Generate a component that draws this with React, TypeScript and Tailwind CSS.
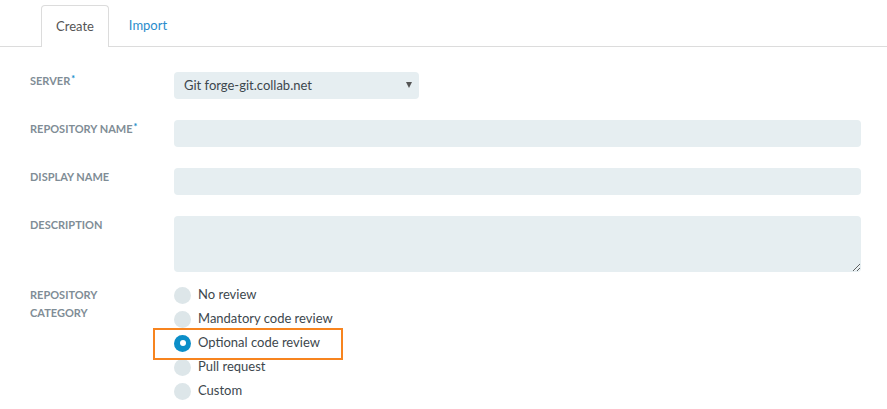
import { useState } from "react";

const LABEL = "text-[11px] font-bold uppercase leading-[18px] text-[#7f8d96]";
const FIELD = "block rounded-[4px] bg-[#e6eef1] text-[13px] text-[#3d474d] outline-none";

function Req() {
  return <span className="relative -top-[3px] ml-px text-[9px] font-black text-[#1b8fcb]">*</span>;
}

function Row({ label, children, top = "pt-0" }: { label: React.ReactNode; children: React.ReactNode; top?: string }) {
  return (
    <div className="flex">
      <div className={`w-[144px] shrink-0 ${top} ${LABEL}`}>{label}</div>
      <div className="flex-1">{children}</div>
    </div>
  );
}

const CATEGORIES = ["No review", "Mandatory code review", "Optional code review", "Pull request", "Custom"];

export default function App() {
  const [cat, setCat] = useState("Optional code review");
  return (
    <div className="h-[409px] w-[887px] overflow-hidden bg-white font-['Lato',sans-serif] text-[#3d474d]">
      <div className="flex h-[47px] items-end border-b border-[#dcdcdc] pl-[41px]">
        <div className="-mb-px flex h-[42px] w-[68px] items-center justify-center rounded-t-[4px] border border-b-0 border-[#dcdcdc] bg-white text-[13px] text-[#555]">
          Create
        </div>
        <div className="flex h-[41px] w-[78px] items-center justify-center text-[13px] text-[#2a8ccc]">Import</div>
      </div>

      <div className="flex flex-col gap-[21px] pl-[30px] pr-[26px] pt-[25px]">
        <Row label={<>Server<Req /></>}>
          <div className={`${FIELD} relative flex h-[27px] w-[245px] items-center pl-[10px]`}>
            Git forge-git.collab.net
            <span className="absolute right-[7px] top-[10px] h-0 w-0 border-x-[3px] border-t-[6px] border-x-transparent border-t-[#555]" />
          </div>
        </Row>
        <Row label={<>Repository name<Req /></>}>
          <input className={`${FIELD} h-[27px] w-full px-[10px]`} />
        </Row>
        <Row label="Display name">
          <input className={`${FIELD} h-[27px] w-full px-[10px]`} />
        </Row>
        <Row label="Description">
          <textarea className={`${FIELD} h-[56px] w-full px-[10px] py-[4px]`} />
        </Row>
        <Row label={<>Repository<br />category</>} top="-mt-[7px]">
          <div className="-mt-[10px] flex flex-col">
            {CATEGORIES.map((c) => {
              const on = c === cat;
              const row = (
                <label className="flex h-[24px] cursor-pointer items-center gap-[7px] text-[13px] text-[#3d474d]" onClick={() => setCat(c)}>
                  {on ? (
                    <span className="flex h-[17px] w-[17px] items-center justify-center rounded-full bg-[#0b8ec8]">
                      <span className="h-[6px] w-[6px] rounded-full bg-white" />
                    </span>
                  ) : (
                    <span className="h-[17px] w-[17px] rounded-full bg-[#dde6e9]" />
                  )}
                  {c}
                </label>
              );
              return c === "Optional code review" ? (
                <div key={c} className="relative">
                  <div className="pointer-events-none absolute -left-[21px] -top-[3px] h-[32px] w-[190px] border-2 border-[#f7841f]" />
                  {row}
                </div>
              ) : (
                <div key={c}>{row}</div>
              );
            })}
          </div>
        </Row>
      </div>
    </div>
  );
}
